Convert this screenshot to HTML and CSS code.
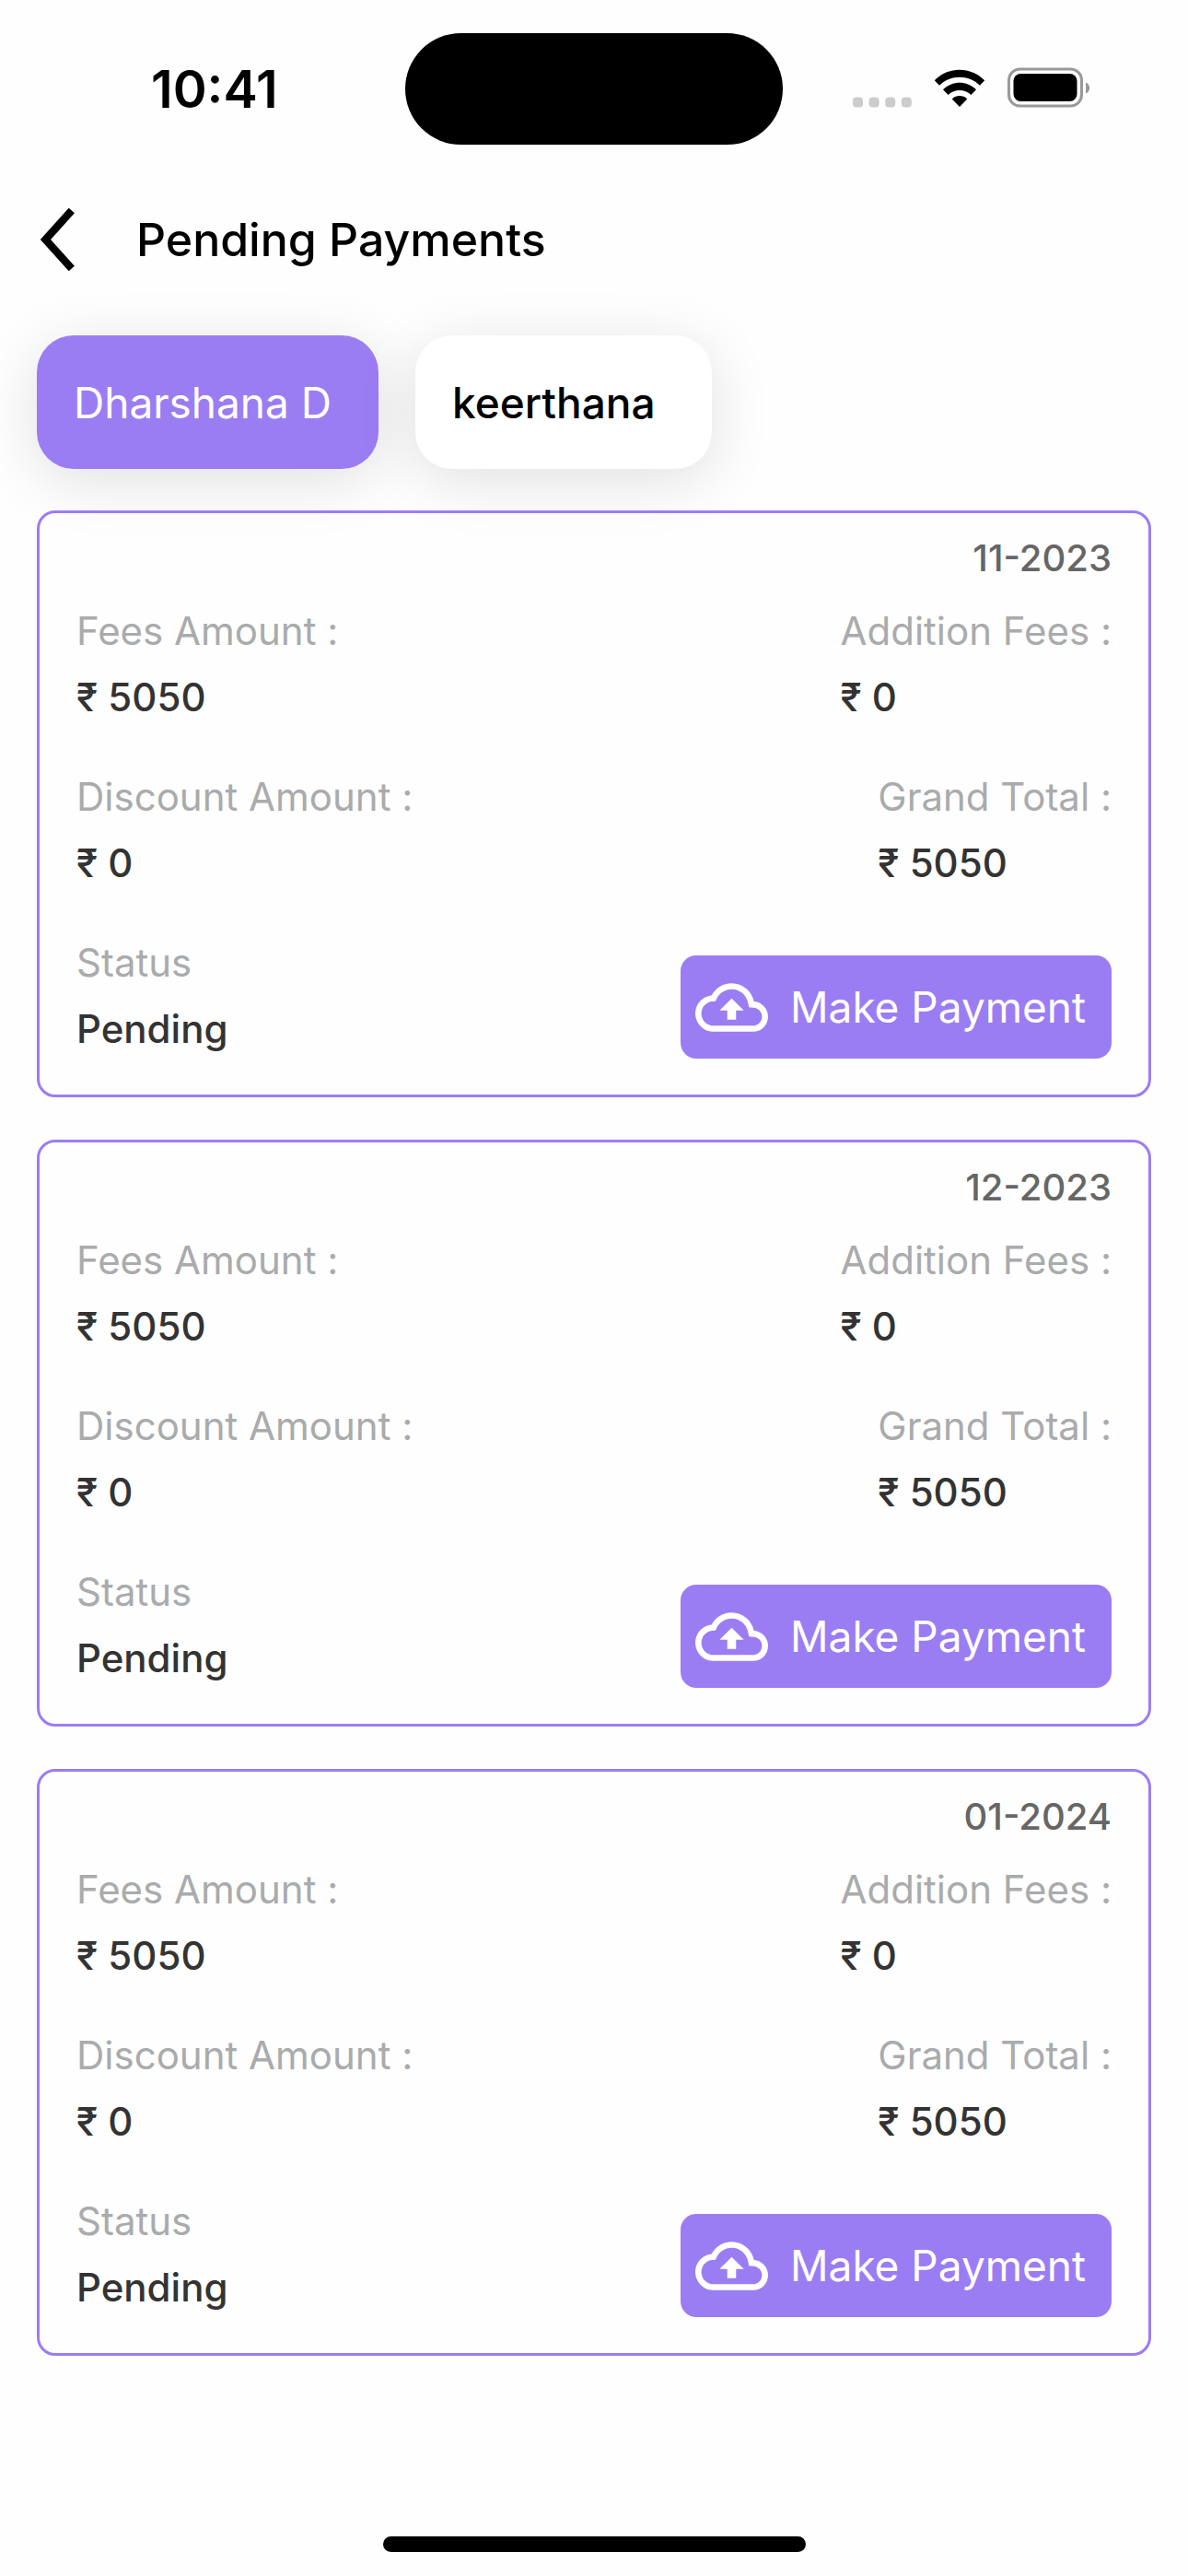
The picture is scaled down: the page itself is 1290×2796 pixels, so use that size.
FILE: index.html
```html
<!DOCTYPE html>
<html lang="en">
<head>
  <meta charset="UTF-8" />
  <meta name="viewport" content="width=device-width, initial-scale=1.0" />
  <title>Pending Payments</title>
  <link rel="stylesheet" href="styles.css">
</head>
<body>
  <svg width="0" height="0" class="sprite" aria-hidden="true">
    <symbol id="cloud-upload" viewBox="0 0 24 24">
      <path d="M19.35 10.04C18.67 6.59 15.64 4 12 4 9.11 4 6.6 5.64 5.35 8.04 2.34 8.36 0 10.91 0 14c0 3.31 2.69 6 6 6h13c2.76 0 5-2.24 5-5 0-2.64-2.05-4.78-4.65-4.96zM19 18H6c-2.21 0-4-1.79-4-4 0-2.05 1.53-3.76 3.56-3.97l1.07-.11.5-.95C8.08 7.14 9.94 6 12 6c2.62 0 4.88 1.86 5.39 4.43l.3 1.5 1.53.11c1.56.1 2.78 1.41 2.78 2.96 0 1.65-1.35 3-3 3zM8 13h2.55v3h2.9v-3H16l-4-4z" />
    </symbol>
  </svg>

  <div class="status-bar">
    <div class="time">10:41</div>
    <div class="island"></div>
    <div class="status-icons">
      <svg class="signal" viewBox="0 0 64 12">
        <rect x="0" y="0.5" width="11" height="11" rx="4" />
        <rect x="17.6" y="0.5" width="11" height="11" rx="4" />
        <rect x="35.2" y="0.5" width="11" height="11" rx="4" />
        <rect x="52.8" y="0.5" width="11" height="11" rx="4" />
      </svg>
      <svg class="wifi" viewBox="0 0 56 42">
        <path d="M0.8 12.3 C15.5 -3.2 40.5 -3.2 55.2 12.3 L50 17.8 C38 5.7 18 5.7 6 17.8 Z" />
        <path d="M10 22.3 C20 12.2 36 12.2 46 22.3 L40.4 28 C33.5 21.3 22.5 21.3 15.6 28 Z" />
        <path d="M19.8 32.4 C24.4 28 31.6 28 36.2 32.4 L28 41 Z" />
      </svg>
      <svg class="battery" viewBox="0 0 90 44">
        <rect x="1.5" y="2" width="79" height="40" rx="12" fill="none" stroke="#999" stroke-width="3" />
        <rect x="6.5" y="7" width="69" height="30" rx="8" />
        <path d="M85 16.5 C90.5 18.5 90.5 26.5 85 28.5 Z" fill="#999" />
      </svg>
    </div>
  </div>

  <header>
    <button class="back" aria-label="Back">
      <svg viewBox="0 0 40 68">
        <path d="M36 4 L9 34 L36 64" fill="none" stroke="#000" stroke-width="8" />
      </svg>
    </button>
    <h1>Pending Payments</h1>
  </header>

  <div class="tabs">
    <button class="tab active">Dharshana D</button>
    <button class="tab">keerthana</button>
  </div>

  <main class="payments">
    <section class="card">
      <div class="month">11-2023</div>
      <div class="row">
        <div class="field">
          <span class="label">Fees Amount :</span>
          <span class="value">₹ 5050</span>
        </div>
        <div class="field">
          <span class="label">Addition Fees :</span>
          <span class="value">₹ 0</span>
        </div>
      </div>
      <div class="row">
        <div class="field">
          <span class="label">Discount Amount :</span>
          <span class="value">₹ 0</span>
        </div>
        <div class="field">
          <span class="label">Grand Total :</span>
          <span class="value">₹ 5050</span>
        </div>
      </div>
      <div class="row pay-row">
        <div class="field">
          <span class="label">Status</span>
          <span class="value">Pending</span>
        </div>
        <button class="pay"><svg><use href="#cloud-upload" /></svg>Make Payment</button>
      </div>
    </section>

    <section class="card">
      <div class="month">12-2023</div>
      <div class="row">
        <div class="field">
          <span class="label">Fees Amount :</span>
          <span class="value">₹ 5050</span>
        </div>
        <div class="field">
          <span class="label">Addition Fees :</span>
          <span class="value">₹ 0</span>
        </div>
      </div>
      <div class="row">
        <div class="field">
          <span class="label">Discount Amount :</span>
          <span class="value">₹ 0</span>
        </div>
        <div class="field">
          <span class="label">Grand Total :</span>
          <span class="value">₹ 5050</span>
        </div>
      </div>
      <div class="row pay-row">
        <div class="field">
          <span class="label">Status</span>
          <span class="value">Pending</span>
        </div>
        <button class="pay"><svg><use href="#cloud-upload" /></svg>Make Payment</button>
      </div>
    </section>

    <section class="card">
      <div class="month">01-2024</div>
      <div class="row">
        <div class="field">
          <span class="label">Fees Amount :</span>
          <span class="value">₹ 5050</span>
        </div>
        <div class="field">
          <span class="label">Addition Fees :</span>
          <span class="value">₹ 0</span>
        </div>
      </div>
      <div class="row">
        <div class="field">
          <span class="label">Discount Amount :</span>
          <span class="value">₹ 0</span>
        </div>
        <div class="field">
          <span class="label">Grand Total :</span>
          <span class="value">₹ 5050</span>
        </div>
      </div>
      <div class="row pay-row">
        <div class="field">
          <span class="label">Status</span>
          <span class="value">Pending</span>
        </div>
        <button class="pay"><svg><use href="#cloud-upload" /></svg>Make Payment</button>
      </div>
    </section>
  </main>

  <div class="home-indicator"></div>
</body>
</html>
```

FILE: styles.css
```css
* {
  box-sizing: border-box;
}

body {
  margin: 0;
  min-height: 100vh;
  display: flex;
  flex-direction: column;
  font-family: Inter, "Liberation Sans", sans-serif;
  background-color: #fefefe;
  color: #000;
}

button {
  font-family: inherit;
  border: none;
  cursor: pointer;
}

.sprite {
  position: absolute;
}

/* Status bar */
.status-bar {
  display: grid;
  grid-template-columns: 1fr auto 1fr;
  align-items: center;
  padding: 36px 106px 0;
}

.time {
  padding-left: 58px;
  font-size: 56px;
  line-height: 64px;
  font-weight: 600;
}

.island {
  width: 410px;
  height: 121px;
  border-radius: 61px;
  background-color: #000;
}

.status-icons {
  display: flex;
  justify-content: flex-end;
  align-items: flex-end;
  gap: 24px;
  padding-bottom: 4px;
}

.signal {
  width: 64px;
  height: 12px;
  fill: #ccc;
}

.wifi {
  width: 56px;
  height: 42px;
}

.battery {
  width: 90px;
  height: 44px;
}

/* Header */
header {
  display: flex;
  align-items: center;
  gap: 66px;
  padding: 67px 40px 0;
}

.back {
  padding: 0;
  background: none;
}

.back svg {
  display: block;
  width: 42px;
  height: 72px;
}

h1 {
  margin: 0;
  font-size: 50px;
  line-height: 60px;
  font-weight: 500;
}

/* Student tabs */
.tabs {
  display: flex;
  gap: 40px;
  padding: 68px 40px 0;
}

.tab {
  min-width: 322px;
  height: 145px;
  padding: 0 40px;
  border-radius: 40px;
  background-color: #fff;
  color: #000;
  font-size: 46px;
  font-weight: 500;
  text-align: left;
  box-shadow: 0 12px 66px rgba(0, 0, 0, 0.12);
}

.tab.active {
  min-width: 371px;
  background-color: #9b7df3;
  color: #fff;
  font-weight: 400;
}

/* Payment cards */
.payments {
  display: flex;
  flex-direction: column;
  gap: 46px;
  padding: 45px 40px;
}

.card {
  display: flex;
  flex-direction: column;
  padding: 26px 40px 39px;
  border: 3px solid #9b7df3;
  border-radius: 20px;
}

.month {
  margin-bottom: 31px;
  text-align: right;
  font-size: 40px;
  line-height: 46px;
  font-weight: 500;
  color: #666;
}

.row {
  display: flex;
  justify-content: space-between;
  margin-bottom: 58px;
}

.field {
  display: flex;
  flex-direction: column;
  gap: 22px;
  font-size: 42px;
  line-height: 50px;
}

.label {
  color: #a9abac;
}

.value {
  color: #333;
  font-weight: 500;
}

.pay-row {
  height: 129px;
  margin-bottom: 0;
}

.pay {
  display: flex;
  align-items: center;
  align-self: flex-end;
  gap: 24px;
  min-width: 468px;
  height: 112px;
  padding: 0 16px;
  border-radius: 17px;
  background-color: #9b7df3;
  color: #fff;
  font-size: 46px;
}

.pay svg {
  width: 79px;
  height: 79px;
  fill: #fff;
}

.home-indicator {
  width: 459px;
  height: 17px;
  margin: auto auto 26px;
  border-radius: 9px;
  background-color: #000;
}
```
